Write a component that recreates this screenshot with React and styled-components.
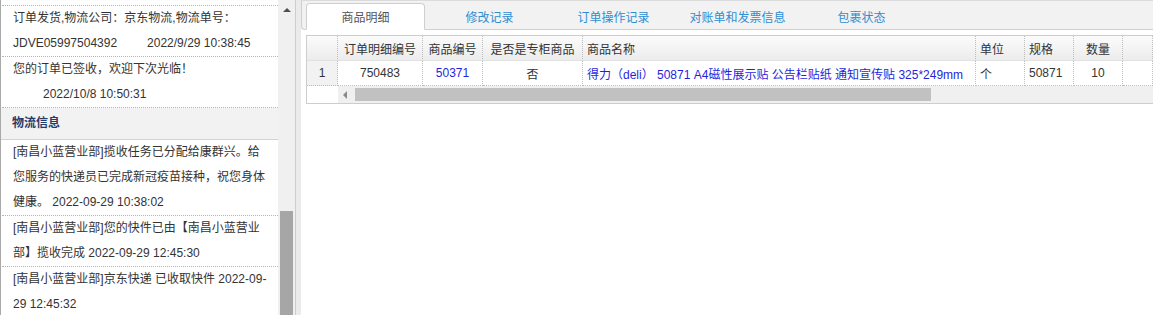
import React from 'react';
import styled, { createGlobalStyle } from 'styled-components';

const GlobalStyle = createGlobalStyle`
    html, body {
        margin: 0;
        padding: 0;
        background: #fff;
        overflow: hidden;
    }
    body {
        font-family: "Liberation Sans", Arial, "Noto Sans CJK SC", sans-serif;
        font-size: 12px;
        color: #333;
    }
`;

const statusList = [
    { text: '订单发货,物流公司：京东物流,物流单号：JDVE05997504392', time: '2022/9/29 10:38:45' },
    { text: '您的订单已签收，欢迎下次光临！', time: '2022/10/8 10:50:31' },
];

const trackList = [
    '[南昌小蓝营业部]揽收任务已分配给康群兴。给您服务的快递员已完成新冠疫苗接种，祝您身体健康。 2022-09-29 10:38:02',
    '[南昌小蓝营业部]您的快件已由【南昌小蓝营业部】揽收完成 2022-09-29 12:45:30',
    '[南昌小蓝营业部]京东快递 已收取快件 2022-09-29 12:45:32',
];

const tabs = ['商品明细', '修改记录', '订单操作记录', '对账单和发票信息', '包裹状态'];

const columns = [
    { title: '', width: 31, align: 'center' },
    { title: '订单明细编号', width: 85, align: 'center' },
    { title: '商品编号', width: 60, align: 'center' },
    { title: '是否是专柜商品', width: 100, align: 'center' },
    { title: '商品名称', width: 393, align: 'left' },
    { title: '单位', width: 49, align: 'left' },
    { title: '规格', width: 49, align: 'left' },
    { title: '数量', width: 49, align: 'center' },
    { title: '', width: 'auto', align: 'left' },
];

const rows = [
    [
        { value: '1', num: true },
        { value: '750483' },
        { value: '50371', link: true },
        { value: '否' },
        { value: '得力（deli） 50871 A4磁性展示贴 公告栏贴纸 通知宣传贴 325*249mm', link: true },
        { value: '个' },
        { value: '50871' },
        { value: '10' },
        { value: '' },
    ],
];

const App = () => {
    return (
        <>
            <GlobalStyle />
            <Page>
                <Side>
                    <SideBody>
                        <StatusList>
                            {statusList.map((s) => (
                                <Entry key={s.time}>
                                    {s.text}
                                    <Time>{s.time}</Time>
                                </Entry>
                            ))}
                        </StatusList>
                        <SectionTitle>物流信息</SectionTitle>
                        {trackList.map((t) => (
                            <Entry key={t}>{t}</Entry>
                        ))}
                    </SideBody>
                    <VScroll>
                        <ArrowUp />
                        <VThumb />
                    </VScroll>
                </Side>
                <Gutter />
                <Main>
                    <TabBar>
                        {tabs.map((t, i) => (
                            <Tab key={t} $active={i === 0}>{t}</Tab>
                        ))}
                    </TabBar>
                    <Panel>
                        <Grid>
                            <Table>
                                <thead>
                                    <tr>
                                        {columns.map((c, i) => (
                                            <Th key={i} $align={c.align} style={{ width: c.width }}>
                                                {c.title}
                                            </Th>
                                        ))}
                                    </tr>
                                </thead>
                                <tbody>
                                    {rows.map((r, ri) => (
                                        <tr key={ri}>
                                            {r.map((cell, ci) => (
                                                <Td
                                                    key={ci}
                                                    $align={columns[ci].align}
                                                    $num={cell.num}
                                                    $link={cell.link}
                                                >
                                                    {cell.value}
                                                </Td>
                                            ))}
                                        </tr>
                                    ))}
                                </tbody>
                            </Table>
                            <HScrollRow>
                                <HScrollGap />
                                <HTrack>
                                    <ArrowLeft />
                                    <HThumb />
                                </HTrack>
                            </HScrollRow>
                        </Grid>
                    </Panel>
                </Main>
            </Page>
        </>
    );
};

const Page = styled.div`
    display: flex;
    width: 1153px;
    height: 315px;
    overflow: hidden;
`;

const Side = styled.div`
    display: flex;
    flex-shrink: 0;
    width: 296px;
    box-sizing: border-box;
    border-left: 1px solid #a9a9a9;
    border-right: 1px solid #cdcdcd;
`;

const SideBody = styled.div`
    width: 277px;
    flex-shrink: 0;
    padding-top: 5px;
    box-sizing: border-box;
    overflow: hidden;
    &::before {
        content: '';
        display: block;
        margin-left: 1px;
        border-top: 1px dotted #b5b5b5;
    }
`;

const StatusList = styled.div`
    display: flex;
    flex-direction: column;
`;

const Entry = styled.div`
    padding: 0 10px 0 11px;
    margin-left: 1px;
    line-height: 25px;
    border-bottom: 1px dotted #b5b5b5;
`;

const Time = styled.span`
    display: inline-block;
    white-space: nowrap;
    margin-left: 30px;
`;

const SectionTitle = styled.div`
    height: 31px;
    line-height: 31px;
    padding-left: 11px;
    background: #f2f2f2;
    border-bottom: 1px solid #d2d2d2;
    font-weight: bold;
    color: #233b6b;
`;

const VScroll = styled.div`
    width: 17px;
    display: flex;
    flex-direction: column;
    align-items: center;
    background: #f0f0f0;
`;

const ArrowUp = styled.div`
    margin-top: 8px;
    width: 0;
    height: 0;
    border-left: 4px solid transparent;
    border-right: 4px solid transparent;
    border-bottom: 4px solid #505050;
`;

const VThumb = styled.div`
    margin-top: auto;
    width: 13px;
    height: 104px;
    background: #a6a6a6;
`;

const Gutter = styled.div`
    width: 5px;
    flex-shrink: 0;
    background: #ebebeb;
`;

const Main = styled.div`
    flex: 1;
    display: flex;
    flex-direction: column;
    background: #fff;
    min-width: 0;
`;

const TabBar = styled.div`
    display: flex;
    align-items: flex-end;
    height: 28px;
    padding-left: 4px;
    background: #f2f2f2;
    border: 1px solid #cfcfcf;
    border-top-color: #dcdcdc;
    border-right: 0;
    border-radius: 0 0 0 4px;
`;

const Tab = styled.div`
    width: 119px;
    height: 27px;
    margin-right: 5px;
    margin-bottom: -1px;
    box-sizing: border-box;
    line-height: 25px;
    text-align: center;
    font-family: "Noto Sans CJK SC", sans-serif;
    font-size: 12px;
    color: ${(p) => (p.$active ? '#555' : '#2e8ed3')};
    background: ${(p) => (p.$active ? '#fff' : 'transparent')};
    border: 1px solid ${(p) => (p.$active ? '#cfcfcf' : 'transparent')};
    border-bottom-color: ${(p) => (p.$active ? '#fff' : 'transparent')};
    border-radius: 4px 4px 0 0;
`;

const Panel = styled.div`
    padding: 5px 0 0 5px;
`;

const Grid = styled.div`
    border: 1px solid #cdcdcd;
    border-right: 0;
`;

const Table = styled.table`
    width: 100%;
    table-layout: fixed;
    border-collapse: separate;
    border-spacing: 0;
`;

const Th = styled.th`
    box-sizing: border-box;
    height: 25px;
    padding: 0 4px;
    font-weight: normal;
    text-align: ${(p) => p.$align};
    white-space: nowrap;
    color: #333;
    background: linear-gradient(#fbfbfb, #ececec);
    border-right: 1px dotted #bdbdbd;
    border-bottom: 1px solid #e2e2e2;
`;

const Td = styled.td`
    box-sizing: border-box;
    height: 25px;
    padding: 0 4px;
    text-align: ${(p) => p.$align};
    white-space: nowrap;
    overflow: hidden;
    color: ${(p) => (p.$link ? '#1f1fe0' : '#333')};
    background: ${(p) => (p.$num ? '#f2f2f2' : '#fff')};
    border-right: 1px dotted #bdbdbd;
    border-bottom: 1px dotted #bdbdbd;
`;

const HScrollRow = styled.div`
    display: flex;
    height: 17px;
`;

const HScrollGap = styled.div`
    width: 31px;
    flex-shrink: 0;
`;

const HTrack = styled.div`
    flex: 1;
    display: flex;
    align-items: center;
    background: #f0f0f0;
`;

const ArrowLeft = styled.div`
    margin-left: 5px;
    width: 0;
    height: 0;
    border-top: 4px solid transparent;
    border-bottom: 4px solid transparent;
    border-right: 4px solid #8a8a8a;
`;

const HThumb = styled.div`
    margin-left: 8px;
    width: 576px;
    height: 13px;
    background: #c1c1c1;
`;

export default App;
